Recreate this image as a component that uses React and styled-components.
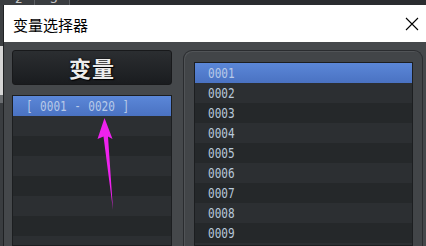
import React from "react";
import styled, { createGlobalStyle } from "styled-components";

const GlobalStyle = createGlobalStyle`
  html, body {
    margin: 0;
    padding: 0;
    background: #2f3134;
    overflow: hidden;
  }
  #root {
    width: 426px;
    height: 246px;
    overflow: hidden;
  }
`;

const Backdrop = styled.div`
  position: relative;
  width: 426px;
  height: 246px;
  display: flex;
  flex-direction: column;
  background: #34373a;
  overflow: hidden;
`;

const TopStrip = styled.div`
  height: 5px;
  flex-shrink: 0;
  display: flex;
  overflow: hidden;
  background: #2a2c2f;
`;

const Tab = styled.div`
  width: 35px;
  height: 5px;
  display: flex;
  align-items: flex-end;
  padding-left: 15px;
  box-sizing: border-box;
  border-right: 1px solid #5c5f63;
  background: #3a3d40;
  color: #c8c8c8;
  font: 12px/12px "DejaVu Sans", sans-serif;
`;

const Stage = styled.div`
  flex: 1;
  display: flex;
  min-height: 0;
`;

const SideStrip = styled.div`
  width: 3px;
  flex-shrink: 0;
  display: flex;
  flex-direction: column;
  background: #3a3d40;
`;

const SidePatch = styled.div`
  height: ${(p) => p.$h}px;
  background: ${(p) => p.$c};
`;

const Dialog = styled.div`
  flex: 1;
  display: flex;
  flex-direction: column;
  border-left: 1px solid #1f2123;
  background: #45484b;
  min-width: 0;
`;

const TitleBar = styled.div`
  height: 37px;
  flex-shrink: 0;
  display: flex;
  align-items: center;
  justify-content: space-between;
  padding: 0 7px 0 9px;
  background: #ffffff;
  color: #000;
  font: 15px "Noto Sans CJK SC", "Noto Sans", sans-serif;
`;

const Title = styled.span`
  margin-top: 2px;
`;

const Body = styled.div`
  flex: 1;
  display: flex;
  gap: 11px;
  padding: 8px 3px 0 8px;
  min-height: 0;
`;

const LeftColumn = styled.div`
  width: 160px;
  flex-shrink: 0;
  display: flex;
  flex-direction: column;
  gap: 10px;
`;

const HeaderButton = styled.div`
  height: 37px;
  box-sizing: border-box;
  display: flex;
  align-items: center;
  justify-content: center;
  border: 1px solid #18191b;
  border-radius: 3px;
  background: linear-gradient(#2b2e31, #1a1c1f);
  color: #ececec;
  font: bold 22px "Noto Sans CJK SC", "Noto Sans", sans-serif;
  text-shadow: 0 0 2px #000, 1px 1px 1px #000;
  letter-spacing: 1px;
`;

const List = styled.div`
  border: 1px solid #1c1e20;
  display: flex;
  flex-direction: column;
  overflow: hidden;
`;

const Row = styled.div`
  height: 20px;
  flex-shrink: 0;
  display: flex;
  align-items: center;
  padding-left: ${(p) => p.$indent}px;
  background: ${(p) =>
    p.$selected
      ? "linear-gradient(#5b87d8, #4a72c2)"
      : p.$odd
      ? "#2c2f32"
      : "#25282a"};
  color: ${(p) => (p.$selected ? "#b7c9e8" : "#b8c9db")};
  white-space: pre;
`;

const Code = styled.span`
  display: inline-block;
  font: 14px "DejaVu Sans Mono", "Liberation Mono", monospace;
  transform: scaleX(0.79);
  transform-origin: left center;
  word-spacing: ${(p) => p.$ws || 0}px;
`;

const Panel = styled.div`
  flex: 1;
  min-width: 0;
  display: flex;
  flex-direction: column;
  border: 1px solid #2a2c2f;
  border-bottom: none;
  border-radius: 9px 9px 0 0;
  padding: 11px 9px 0 10px;
  background: #424548;
  box-shadow: inset 1px 1px 0 #515457;
`;

const Annotation = styled.svg`
  position: absolute;
  left: 95px;
  top: 116px;
  pointer-events: none;
`;

const CloseIcon = () => (
  <svg width="14" height="14" viewBox="0 0 14 14">
    <path d="M1 1 L13 13 M13 1 L1 13" stroke="#000" strokeWidth="1.1" fill="none" />
  </svg>
);

const variables = Array.from({ length: 12 }, (_, i) =>
  String(i + 1).padStart(4, "0")
);

export default function App() {
  return (
    <>
      <GlobalStyle />
      <Backdrop>
        <TopStrip>
          <Tab>2</Tab>
          <Tab>3</Tab>
        </TopStrip>
        <Stage>
          <SideStrip>
            <SidePatch $h={41} $c="#3c3f42" />
            <SidePatch $h={49} $c="#d6d6d6" />
            <SidePatch $h={8} $c="#6a6d70" />
          </SideStrip>
          <Dialog>
            <TitleBar>
              <Title>变量选择器</Title>
              <CloseIcon />
            </TitleBar>
            <Body>
              <LeftColumn>
                <HeaderButton>变量</HeaderButton>
                <List>
                  {Array.from({ length: 8 }, (_, i) => (
                    <Row key={i} $indent={13} $selected={i === 0} $odd={i % 2 === 1}>
                      {i === 0 && <Code $ws={1}>[ 0001 - 0020 ]</Code>}
                    </Row>
                  ))}
                </List>
              </LeftColumn>
              <Panel>
                <List>
                  {variables.map((v, i) => (
                    <Row key={v} $indent={13} $selected={i === 0} $odd={i % 2 === 1}>
                      <Code>{v}</Code>
                    </Row>
                  ))}
                </List>
              </Panel>
            </Body>
          </Dialog>
        </Stage>
        <Annotation width="22" height="98" viewBox="0 0 22 98">
          <polygon
            points="9.5,2 17.5,23 13,20.5 18,94 8.5,20.5 2.5,23"
            fill="#ee22ee"
          />
        </Annotation>
      </Backdrop>
    </>
  );
}
